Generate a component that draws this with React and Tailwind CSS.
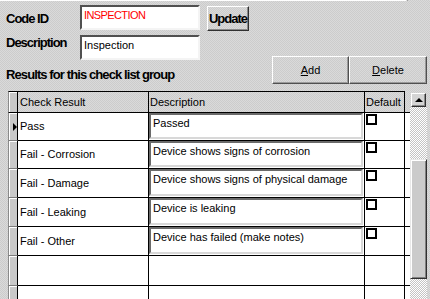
import React from "react";

const rows = [
  { result: "Pass", desc: "Passed", h: "h-[28px]", current: true },
  { result: "Fail - Corrosion", desc: "Device shows signs of corrosion", h: "h-[28px]" },
  { result: "Fail - Damage", desc: "Device shows signs of physical damage", h: "h-[29px]" },
  { result: "Fail - Leaking", desc: "Device is leaking", h: "h-[29px]" },
  { result: "Fail - Other", desc: "Device has failed (make notes)", h: "h-[29px]" },
  { h: "h-[30px]" },
  { h: "h-[30px]" },
];

const dither =
  "bg-[image:repeating-conic-gradient(#dadada_0_25%,#cccccc_0_50%)] bg-[length:2px_2px]";

function Field({ value, red }) {
  return (
    <div className="w-[120px] h-[25px] bg-white border-2 border-t-[#505050] border-l-[#505050] border-r-[#f4f4f4] border-b-[#f4f4f4] pl-[2px] pt-[2px] text-[11px] leading-[13px]">
      <span className={red ? "text-[#ff0000] tracking-[-0.6px]" : "text-black"}>{value}</span>
    </div>
  );
}

function RowCells({ row }) {
  return (
    <div className={`flex ${row.h}`}>
      <div className="w-[10px] bg-[#c9c9c9] border-l border-l-[#8a8a8a] border-r border-r-black border-b border-b-[#7a7a7a] shadow-[inset_1px_1px_0_#ffffff] flex items-center justify-end">
        {row.current && (
          <div className="w-0 h-0 border-y-[4px] border-y-transparent border-l-[4px] border-l-black" />
        )}
      </div>
      <div className="w-[131px] bg-white border-r border-b border-black pl-[2px] flex items-center text-[11px]">
        {row.result}
      </div>
      <div className="w-[216px] bg-white border-r border-b border-black pr-[1px] pb-[1px]">
        {row.desc && (
          <div className="h-full border-2 border-t-[#6a6a6a] border-l-[#6a6a6a] border-r-[#d8d8d8] border-b-[#d8d8d8] pl-[2px] pt-[1px] text-[11px] leading-[14px]">
            {row.desc}
          </div>
        )}
      </div>
      <div className="w-[40px] bg-white border-r border-b border-black">
        {row.desc && (
          <div className="ml-px mt-px w-[11px] h-[11px] border-2 border-black bg-white" />
        )}
      </div>
      <div className="w-[5px] bg-white border-b border-black" />
    </div>
  );
}

export default function App() {
  return (
    <div
      className={`w-[430px] h-[299px] overflow-hidden flex flex-col text-black font-['Liberation_Sans',Arial,sans-serif] ${dither}`}
    >
      <div className="h-[2px] w-[408px] border-b border-b-white border-r-2 border-r-[#808080]" />

      <div className="mt-[4px] h-[25px] flex">
        <div className="w-[80px] pl-[6px] pt-[7px] text-[13px] leading-[14px] font-bold tracking-[-1px]">
          Code ID
        </div>
        <Field value="INSPECTION" red />
        <button
          className={`ml-[7px] mt-[1px] w-[42px] h-[25px] border border-t-white border-l-white border-r-[#303030] border-b-[#303030] shadow-[inset_-1px_-1px_0_#8a8a8a] text-[13px] font-bold tracking-[-1px] ${dither}`}
        >
          Update
        </button>
      </div>

      <div className="mt-[5px] h-[25px] flex">
        <div className="w-[80px] pl-[6px] pt-[1px] text-[13px] leading-[14px] font-bold tracking-[-1px]">
          Description
        </div>
        <Field value="Inspection" />
      </div>

      <div className="mt-[-4px] h-[28px] flex">
        <div className="pl-[6px] pt-[12px] text-[13px] leading-[14px] font-bold tracking-[-0.9px]">
          Results for this check list group
        </div>
        <div className="ml-auto mr-[3px] flex">
          <button
            className={`w-[77px] h-[28px] border border-t-white border-l-white border-r-[#505050] border-b-[#505050] shadow-[inset_-1px_-1px_0_#9a9a9a] text-[11px] ${dither}`}
          >
            <u className="underline-offset-1">A</u>dd
          </button>
          <button
            className={`w-[78px] h-[28px] border border-t-white border-l-white border-r-[#505050] border-b-[#505050] shadow-[inset_-1px_-1px_0_#9a9a9a] text-[11px] ${dither}`}
          >
            <u className="underline-offset-1">D</u>elete
          </button>
        </div>
      </div>

      <div className="mt-[7px] ml-[8px] flex items-start">
        <div className="w-[402px] flex flex-col">
          <div className="flex h-[22px]">
            <div className="w-[10px] bg-[#c9c9c9] border-l border-l-[#8a8a8a] border-t border-t-black border-r border-r-black border-b border-b-black shadow-[inset_1px_1px_0_#ffffff]" />
            <div className="w-[131px] border-t border-r border-b border-black pl-[2px] flex items-center text-[11px]">
              Check Result
            </div>
            <div className="w-[216px] border-t border-r border-b border-black pl-[1px] flex items-center text-[11px]">
              Description
            </div>
            <div className="w-[40px] border-t border-r border-b border-black pl-[1px] flex items-center text-[11px]">
              Default
            </div>
            <div className="w-[5px] border-b border-black" />
          </div>
          {rows.map((row, i) => (
            <RowCells key={i} row={row} />
          ))}
        </div>

        <div className="w-[17px] mt-[1px] h-[220px] flex flex-col">
          <div className="h-[14px] mx-px mt-px bg-[#d4d4d4] border border-t-white border-l-white border-r-[#303030] border-b-[#303030] shadow-[inset_-1px_-1px_0_#8a8a8a] flex items-center justify-center">
            <div className="w-0 h-0 border-x-[4px] border-x-transparent border-b-[4px] border-b-black" />
          </div>
          <div className="flex-1 bg-[image:repeating-conic-gradient(#ffffff_0_25%,#c4c4c4_0_50%)] bg-[length:2px_2px]">
            <div className="mt-[52px] h-[120px] bg-[#cbcbcb] border border-t-[#e8e8e8] border-l-[#e8e8e8] border-r-[#303030] border-b-[#303030] shadow-[inset_1px_1px_0_#ffffff,inset_-1px_-1px_0_#808080]" />
          </div>
        </div>
      </div>
    </div>
  );
}
